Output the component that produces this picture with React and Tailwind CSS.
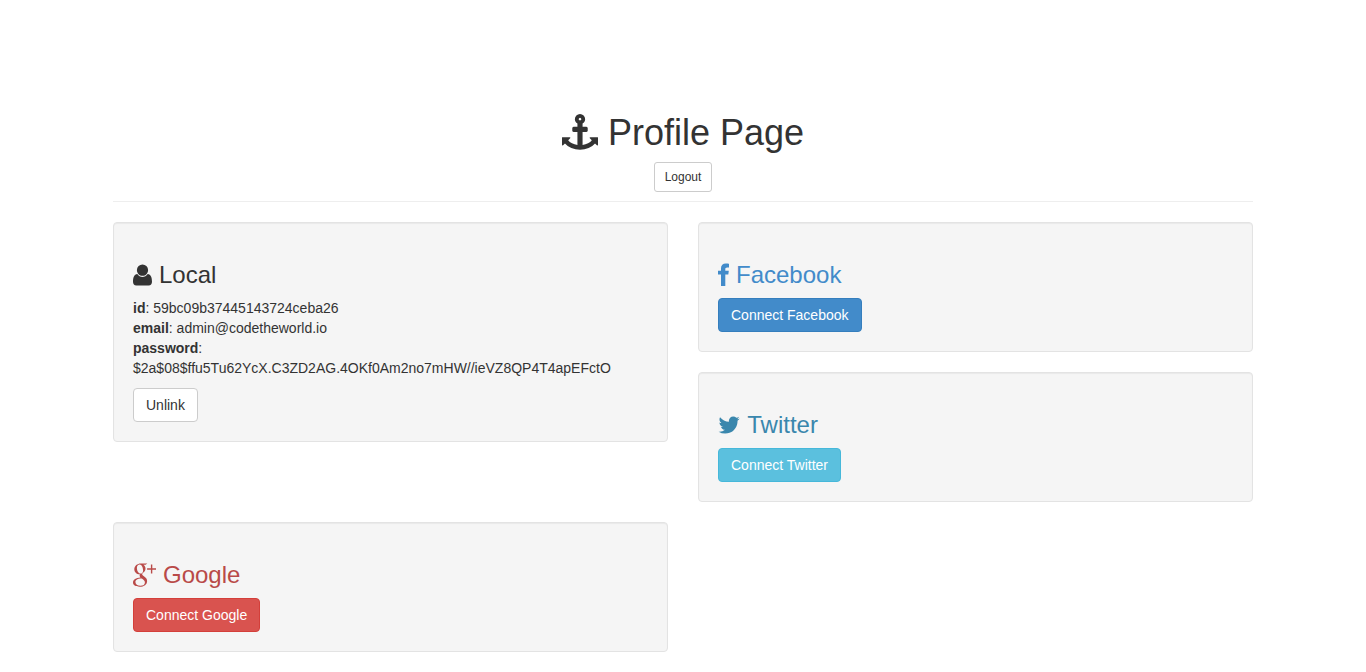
const HEADING_ICONS = {
    anchor: {
        viewBox: '0 0 1792 1792',
        path: 'M960 256q0-26-19-45t-45-19-45 19-19 45 19 45 45 19 45-19 19-45zm832 928v352q0 22-20 30-8 2-12 2-12 0-23-9l-93-93q-119 143-318.5 226.5t-429.5 83.5-429.5-83.5-318.5-226.5l-93 93q-9 9-23 9-4 0-12-2-20-8-20-30v-352q0-14 9-23t23-9h352q22 0 30 20 8 19-7 35l-100 100q67 91 189.5 153.5t271.5 82.5v-647h-192q-26 0-45-19t-19-45v-128q0-26 19-45t45-19h192v-163q-58-34-93-92.5t-35-128.5q0-106 75-181t181-75 181 75 75 181q0 70-35 128.5t-93 92.5v163h192q26 0 45 19t19 45v128q0 26-19 45t-45 19h-192v647q149-20 271.5-82.5t189.5-153.5l-100-100q-15-16-7-35 8-20 30-20h352q14 0 23 9t9 23z',
    },
    user: {
        viewBox: '0 0 19 24',
        path: 'M9.500 1.500a5.600 5.600 0 0 1 5.600 5.400c0 3.300-2.500 5.900-5.600 5.900s-5.600-2.600-5.600-5.900a5.600 5.600 0 0 1 5.600-5.400zM4.300 11c1.300 1.900 3.100 2.900 5.200 2.900s3.900-1 5.200-2.900c3.200.5 4.300 3.500 4.300 7.800 0 2.400-1.300 3.700-3.300 3.700H3.300c-2 0-3.300-1.300-3.300-3.700C0 14.500 1.100 11.500 4.300 11z',
    },
    facebook: {
        viewBox: '0 0 11 24',
        path: 'M11 .7v3.700H9.200c-1.500 0-1.900.7-1.900 1.900v1.500h3.500l-.5 3.800h-3V23H3V11.600H0V7.800h3V5.200C3 2.200 4.900.5 7.800.5c1.400 0 2.600.1 3.200.2z',
    },
    twitter: {
        viewBox: '64 0 1664 1792',
        path: 'M1684 408q-67 98-162 167 1 14 1 42 0 130-38 259.5t-115.5 248.5-184.5 210.5-258 146-323 54.5q-271 0-496-145 35 4 78 4 225 0 401-138-105-2-188-64.5t-114-159.5q33 5 61 5 43 0 85-11-112-23-185.5-111.5t-73.5-205.5v-4q68 38 146 41-66-44-105-115t-39-154q0-88 44-163 121 149 294.5 238.5t371.5 99.5q-8-38-8-74 0-134 94.5-228.5t228.5-94.5q140 0 236 102 109-21 205-78-37 115-142 178 93-10 186-50z',
    },
    googlePlus: {
        viewBox: '0 0 23 24',
        path: 'M14.300.6 12.600 1.700h-2.200c1.400 1 2.100 2.300 2.100 3.900 0 1.700-.7 2.900-2.100 4-.9.7-1.200 1.100-1.200 1.700s.4 1 1.400 1.800c2.300 1.700 3.500 2.900 3.500 5.100 0 3-2.800 5.600-7.600 5.600C2.600 23.800 0 22.100 0 19.600c0-3 3-4.900 7.500-5.100-.6-.7-.9-1.300-.9-2 0-.5.100-.8.3-1.200C3.500 11.400 1.300 9 1.300 6.200c0-3.200 3-5.600 6.600-5.600zM6.700 1.400c-1.700 0-2.800 1.400-2.800 3.500 0 2.700 1.500 5.600 3.700 5.600 1.600 0 2.500-1.200 2.500-3.100 0-2.800-1.300-6-3.400-6zM8.300 15.400c-3.500 0-5.900 1.300-5.900 3.600 0 2.200 2 3.700 5 3.700 2.900 0 4.500-1.300 4.500-3.300 0-1.700-1-2.500-3.100-4zM17.900 1.500h1.400v3.800H23v1.400h-3.700v3.800h-1.400V6.700h-3.800V5.300h3.800z',
    },
};

function HeadingIcon({ name, className }) {
    const icon = HEADING_ICONS[name];

    return (
        <svg viewBox={icon.viewBox} fill="currentColor" fillRule="evenodd" aria-hidden="true" className={className}>
            <path d={icon.path} />
        </svg>
    );
}

function Well({ children }) {
    return (
        <div className="min-h-5 mb-5 p-[19px] bg-[#f5f5f5] border border-[#e3e3e3] rounded-sm shadow-[inset_0_1px_1px_rgba(0,0,0,0.05)]">
            {children}
        </div>
    );
}

function WellTitle({ icon, className = '', children }) {
    return (
        <h3 className={`mt-5 mb-2.5 flex items-center gap-[7px] text-2xl leading-[26px] ${className}`}>
            <HeadingIcon name={icon} className="h-6" />
            {children}
        </h3>
    );
}

function Button({ className, children }) {
    return (
        <button
            type="button"
            className={`inline-block border rounded-sm px-3 py-1.5 text-sm leading-5 cursor-pointer ${className}`}
        >
            {children}
        </button>
    );
}

export default function App() {
    const user = {
        id: '59bc09b37445143724ceba26',
        email: 'admin@codetheworld.io',
        password: '$2a$08$ffu5Tu62YcX.C3ZD2AG.4OKf0Am2no7mHW//ieVZ8QP4T4apEFctO',
    };

    return (
        <main className="max-w-[1170px] mx-auto px-[15px] pt-20 font-['Liberation_Sans',Arial,sans-serif] text-sm leading-5 text-[#333333]">
            {/* Page header */}
            <header className="mt-[34px] pb-[9px] mb-5 border-b border-[#eeeeee] text-center">
                <h1 className="mb-2.5 flex items-start justify-center gap-2.5 text-4xl leading-[38px]">
                    <HeadingIcon name="anchor" className="size-9" />
                    Profile Page
                </h1>
                <button
                    type="button"
                    className="border border-[#cccccc] rounded-[3px] bg-white px-2.5 py-[5px] text-xs leading-[18px] cursor-pointer"
                >
                    Logout
                </button>
            </header>

            <div className="grid grid-cols-1 sm:grid-cols-2 gap-x-[30px] items-start">
                {/* Local */}
                <div className="sm:row-span-2 min-w-0">
                    <Well>
                        <WellTitle icon="user">Local</WellTitle>
                        <p className="mb-2.5 break-words">
                            <strong>id</strong>: {user.id}<br />
                            <strong>email</strong>: {user.email}<br />
                            <strong>password</strong>:<br />
                            {user.password}
                        </p>
                        <Button className="bg-white border-[#cccccc]">Unlink</Button>
                    </Well>
                </div>

                {/* Facebook */}
                <Well>
                    <WellTitle icon="facebook" className="text-[#428bca]">Facebook</WellTitle>
                    <Button className="bg-[#428bca] border-[#357ebd] text-white">Connect Facebook</Button>
                </Well>

                {/* Twitter */}
                <Well>
                    <WellTitle icon="twitter" className="text-[#3a87ad]">Twitter</WellTitle>
                    <Button className="bg-[#5bc0de] border-[#46b8da] text-white">Connect Twitter</Button>
                </Well>

                {/* Google */}
                <Well>
                    <WellTitle icon="googlePlus" className="text-[#b94a48]">Google</WellTitle>
                    <Button className="bg-[#d9534f] border-[#d43f3a] text-white">Connect Google</Button>
                </Well>
            </div>
        </main>
    );
}
